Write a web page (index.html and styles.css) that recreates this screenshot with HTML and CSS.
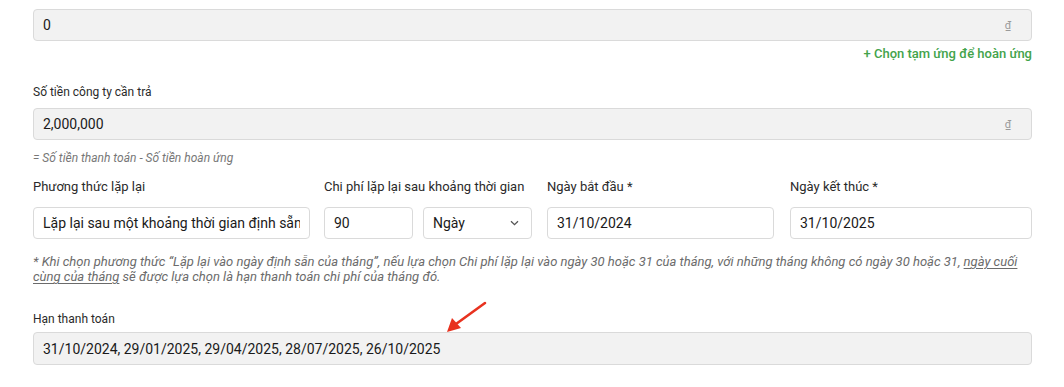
FILE: index.html
```html
<!DOCTYPE html>
<html lang="vi">
<head>
<meta charset="utf-8">
<link rel="stylesheet" href="styles.css">
</head>
<body>
<div class="page">
  <div class="box box-gray">
    <span class="val">0</span>
    <span class="cur">₫</span>
  </div>
  <div class="link-row"><span class="link">+ Chọn tạm ứng để hoàn ứng</span></div>

  <div class="label small first">Số tiền công ty cần trả</div>
  <div class="box box-gray">
    <span class="val">2,000,000</span>
    <span class="cur">₫</span>
  </div>
  <div class="hint">= Số tiền thanh toán - Số tiền hoàn ứng</div>

  <div class="row">
    <div class="col c1">
      <div class="label">Phương thức lặp lại</div>
      <div class="box box-white"><span class="val clip">Lặp lại sau một khoảng thời gian định sẵn</span></div>
    </div>
    <div class="col c2">
      <div class="label">Chi phí lặp lại sau khoảng thời gian</div>
      <div class="pair">
        <div class="box box-white num"><span class="val">90</span></div>
        <div class="box box-white sel">
          <span class="val">Ngày</span>
          <svg class="chev" width="9" height="6" viewBox="0 0 9 6"><path d="M1 1.2 L4.5 4.6 L8 1.2" fill="none" stroke="#555" stroke-width="1.3"/></svg>
        </div>
      </div>
    </div>
    <div class="col c3">
      <div class="label">Ngày bắt đầu *</div>
      <div class="box box-white"><span class="val">31/10/2024</span></div>
    </div>
    <div class="col c4">
      <div class="label">Ngày kết thúc *</div>
      <div class="box box-white"><span class="val">31/10/2025</span></div>
    </div>
  </div>

  <p class="note">* Khi chọn phương thức “Lặp lại vào ngày định sẵn của tháng”, nếu lựa chọn Chi phí lặp lại vào ngày 30 hoặc 31 của tháng, với những tháng không có ngày 30 hoặc 31, <u>ngày cuối cùng của tháng</u> sẽ được lựa chọn là hạn thanh toán chi phí của tháng đó.</p>

  <div class="label small due">Hạn thanh toán</div>
  <div class="box box-gray tall">
    <span class="val">31/10/2024, 29/01/2025, 29/04/2025, 28/07/2025, 26/10/2025</span>
  </div>

  <svg class="arrow" width="50" height="40" viewBox="0 0 50 40">
    <line x1="47" y1="2" x2="18" y2="23" stroke="#e8321f" stroke-width="2.6" stroke-linecap="round"/>
    <polygon points="9,31 14,17 23,27" fill="#e8321f"/>
  </svg>
</div>
</body>
</html>
```

FILE: styles.css
```css
* { box-sizing: border-box; }
html, body { margin: 0; padding: 0; background: #fff; }
body {
  font-family: Roboto, "Noto Sans", "Liberation Sans", sans-serif;
  color: #222;
}
.page {
  position: relative;
  padding: 9px 32px 0 33px;
  width: 1064px;
}
.box {
  display: flex;
  align-items: center;
  justify-content: space-between;
  height: 32px;
  border: 1px solid #dadada;
  border-radius: 4px;
  padding: 0 9px 0 9px;
  font-size: 14px;
}
.box-gray { background: #f2f2f2; padding-right: 20px; }
.box-white { background: #fff; }
.box.tall { height: 33px; }
.val { white-space: nowrap; color: #1a1a1a; }
.clip { overflow: hidden; }
.cur {
  font-size: 11px;
  color: #9a9a9a;
}
.link-row {
  display: flex;
  justify-content: flex-end;
  margin-top: 5px;
  line-height: 16px;
}
.link {
  font-size: 13px;
  font-weight: 500;
  color: #43a34b;
}
.label {
  font-size: 13px;
  line-height: 16px;
  color: #2a2a2a;
  margin-bottom: 12px;
}
.label.small { font-size: 12px; margin-bottom: 8px; }
.label.first { margin-top: 22px; }
.hint {
  font-size: 12px;
  font-style: italic;
  color: #777;
  line-height: 16px;
  margin-top: 10px;
}
.row {
  display: flex;
  margin-top: 13px;
}
.c1 { width: 277px; margin-right: 14px; }
.c2 { width: 208px; margin-right: 15px; }
.c3 { width: 227px; margin-right: 16px; }
.c4 { flex: 1; }
.pair { display: flex; gap: 10px; }
.num { width: 89px; }
.sel { flex: 1; padding-right: 12px; }
.chev { display: block; }
.note {
  margin: 15px 0 0;
  font-size: 13px;
  font-style: italic;
  color: #6b6b6b;
  line-height: 15px;
}
.note u { text-underline-offset: 2px; }
.label.due { margin-top: 27px; margin-bottom: 5px; }
.arrow {
  position: absolute;
  left: 438px;
  top: 301px;
}
```
